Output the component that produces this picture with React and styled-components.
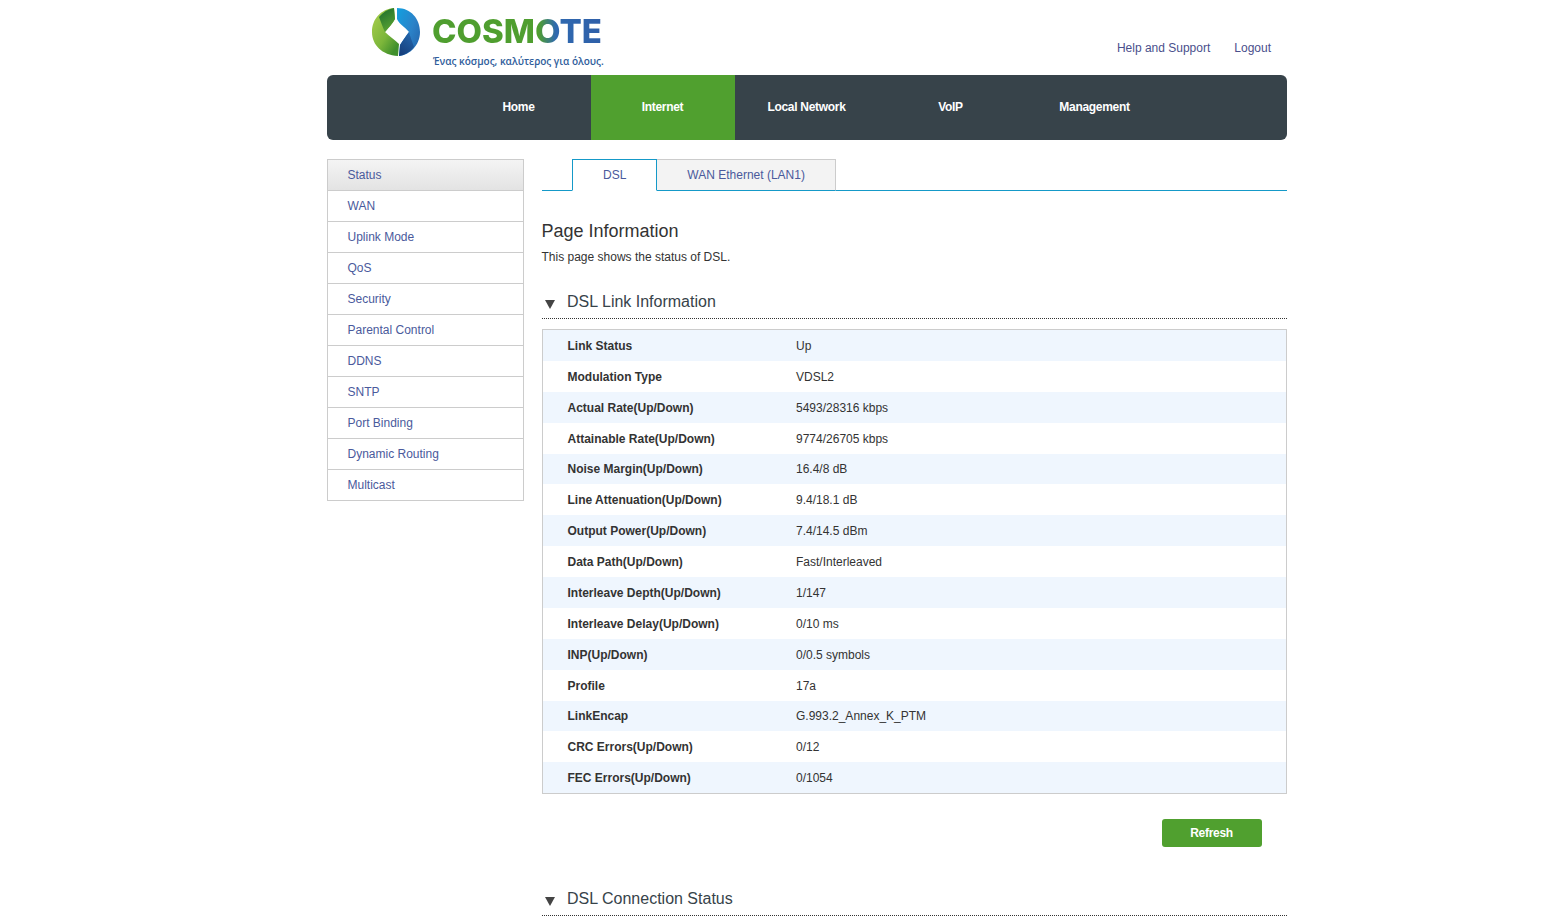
import React from 'react'
import styled, { createGlobalStyle } from 'styled-components'

const Global = createGlobalStyle`
  html, body { margin: 0; padding: 0; background: #fff; }
  body { font-family: "Liberation Sans", Arial, sans-serif; font-size: 12px; color: #333; }
`
const Page = styled.div`
  width: 960px;
  margin-left: 327px;
  height: 921px;
  overflow: hidden;
`
const Header = styled.header`
  height: 75px;
  display: flex;
  justify-content: space-between;
`
const Brand = styled.div`
  display: flex;
  gap: 11px;
  padding: 7px 0 0 44px;
`
const BrandText = styled.div`
  display: flex;
  flex-direction: column;
`
const Wordmark = styled.div`
  font-family: Inter, sans-serif;
  font-weight: 800;
  font-size: 33px;
  line-height: 48px;
  background: linear-gradient(90deg, #4f9e2f 0%, #4f9e2f 62%, #2f69b0 72%, #2f5fa8 100%);
  -webkit-background-clip: text;
  background-clip: text;
  color: transparent;
`
const Slogan = styled.div`
  font-family: "Open Sans", sans-serif;
  font-weight: 600;
  font-size: 10px;
  line-height: 14px;
  color: #2f5d9b;
  padding-left: 1px;
  margin-top: -1px;
`
const HeaderLinks = styled.div`
  display: flex;
  gap: 24px;
  padding: 41px 16px 0 0;
  a { color: #4a4f8c; text-decoration: none; line-height: 14px; }
`
const Nav = styled.nav`
  height: 65px;
  background: #37434a;
  border-radius: 6px;
  display: flex;
  padding-left: 120px;
`
const NavItem = styled.a`
  width: 144px;
  display: flex;
  align-items: center;
  justify-content: center;
  padding: 0 1px 2px 0;
  box-sizing: border-box;
  color: #fff;
  font-weight: bold;
  letter-spacing: -0.3px;
  background: ${p => (p.$active ? '#50a02f' : 'transparent')};
`
const Body = styled.div`
  display: flex;
  gap: 18px;
  padding-top: 19px;
`
const Side = styled.ul`
  width: 197px;
  flex: none;
  margin: 0;
  padding: 0;
  list-style: none;
  align-self: flex-start;
  box-sizing: border-box;
  border: 1px solid #ccc;
  border-bottom: 0;
`
const SideItem = styled.li`
  height: 31px;
  box-sizing: border-box;
  padding-left: 19.5px;
  line-height: 30px;
  color: #4a5a9c;
  border-bottom: 1px solid #ccc;
  background: ${p => (p.$active ? 'linear-gradient(#f4f4f4, #e3e3e3)' : '#fff')};
`
const Main = styled.main`
  flex: 1;
`
const Tabs = styled.div`
  height: 32px;
  box-sizing: border-box;
  display: flex;
  padding-left: 30px;
  border-bottom: 1px solid #1599c8;
`
const Tab = styled.div`
  height: 32px;
  box-sizing: border-box;
  padding: 0 30px;
  line-height: 30px;
  color: #4a5a9c;
  border: 1px solid ${p => (p.$active ? '#1599c8' : '#ccc')};
  border-left: ${p => (p.$active ? '1px solid #1599c8' : '0')};
  border-bottom: ${p => (p.$active ? '1px solid #fff' : '1px solid #1599c8')};
  background: ${p => (p.$active ? '#fff' : '#f3f3f3')};
`
const Title = styled.h1`
  margin: 29px 0 0 -0.5px;
  font-size: 18px;
  font-weight: normal;
  line-height: 22px;
  color: #333;
`
const Intro = styled.p`
  margin: 8px 0 0 -0.5px;
  line-height: 14px;
  color: #333;
`
const Section = styled.div`
  display: flex;
  align-items: center;
  box-sizing: border-box;
  height: 38px;
  padding: 4px 0 0 3px;
  gap: 12px;
  font-size: 16px;
  color: #37434a;
  border-bottom: 1px dotted #333;
  margin-top: ${p => p.$top}px;
`
const Triangle = styled.span`
  width: 0;
  height: 0;
  margin-top: 5px;
  border-left: 5px solid transparent;
  border-right: 5px solid transparent;
  border-top: 9px solid #444;
`
const Table = styled.div`
  margin-top: 10px;
  border: 1px solid #ccc;
`
const Row = styled.div`
  height: 30.89px;
  box-sizing: border-box;
  display: flex;
  align-items: center;
  padding: 1px 0 0 24.5px;
  color: #333;
  &:nth-child(odd) { background: #eff6fe; }
`
const Label = styled.div`
  width: 228.5px;
  font-weight: bold;
`
const Actions = styled.div`
  display: flex;
  justify-content: flex-end;
  padding: 25px 25px 0 0;
`
const Refresh = styled.button`
  width: 100px;
  height: 28px;
  padding: 0 1px 0 0;
  border: 0;
  border-radius: 3px;
  background: #50a02f;
  color: #fff;
  font: bold 12px "Liberation Sans", Arial, sans-serif;
  letter-spacing: -0.3px;
`

const rows = [
  ['Link Status', 'Up'],
  ['Modulation Type', 'VDSL2'],
  ['Actual Rate(Up/Down)', '5493/28316 kbps'],
  ['Attainable Rate(Up/Down)', '9774/26705 kbps'],
  ['Noise Margin(Up/Down)', '16.4/8 dB'],
  ['Line Attenuation(Up/Down)', '9.4/18.1 dB'],
  ['Output Power(Up/Down)', '7.4/14.5 dBm'],
  ['Data Path(Up/Down)', 'Fast/Interleaved'],
  ['Interleave Depth(Up/Down)', '1/147'],
  ['Interleave Delay(Up/Down)', '0/10 ms'],
  ['INP(Up/Down)', '0/0.5 symbols'],
  ['Profile', '17a'],
  ['LinkEncap', 'G.993.2_Annex_K_PTM'],
  ['CRC Errors(Up/Down)', '0/12'],
  ['FEC Errors(Up/Down)', '0/1054'],
]
const menu = ['Status', 'WAN', 'Uplink Mode', 'QoS', 'Security', 'Parental Control', 'DDNS', 'SNTP', 'Port Binding', 'Dynamic Routing', 'Multicast']
const navs = ['Home', 'Internet', 'Local Network', 'VoIP', 'Management']

const Logo = () => (
  <svg width="50" height="50" viewBox="0 0 50 50">
    <defs>
      <linearGradient id="lg" x1="0" y1="0.2" x2="0.7" y2="1">
        <stop offset="0" stopColor="#a4cc4a" />
        <stop offset="0.6" stopColor="#7cb63a" />
        <stop offset="1" stopColor="#3f8f2c" />
      </linearGradient>
      <linearGradient id="lgd" x1="0.2" y1="0" x2="0.6" y2="1">
        <stop offset="0" stopColor="#1d6e2c" />
        <stop offset="1" stopColor="#5aa334" />
      </linearGradient>
      <linearGradient id="lb" x1="0" y1="0" x2="1" y2="0.8">
        <stop offset="0" stopColor="#12a0e0" />
        <stop offset="0.6" stopColor="#2b82c8" />
        <stop offset="1" stopColor="#2467ae" />
      </linearGradient>
      <linearGradient id="lbd" x1="0.8" y1="0" x2="0.3" y2="1">
        <stop offset="0" stopColor="#2468ae" />
        <stop offset="1" stopColor="#163f7c" />
      </linearGradient>
    </defs>
    <path d="M23 1 C10 2 1 12 1 25 C1 38 11 48 27 49 L28 37 C24 33 18 29 14 25 C18 20 22 16 24 12 Z" fill="url(#lg)" />
    <path d="M23 1 C17 2 12 5 8 10 C10 15 12 21 14 25 C18 20 22 16 24 12 Z" fill="url(#lgd)" />
    <path d="M26 1 C40 1 49 12 49 25 C49 38 39 48 28 49 L29 38 C32 33 35 29 38 25 C34 20 28 17 26 12 Z" fill="url(#lb)" />
    <path d="M28 49 C34 48 39 45 43 40 C41 34 39 29 38 25 C35 29 32 33 29 38 Z" fill="url(#lbd)" />
  </svg>
)

export default function App() {
  return (
    <Page>
      <Global />
      <Header>
        <Brand>
          <Logo />
          <BrandText>
            <Wordmark>COSMOTE</Wordmark>
            <Slogan>Ένας κόσμος, καλύτερος για όλους.</Slogan>
          </BrandText>
        </Brand>
        <HeaderLinks>
          <a>Help and Support</a>
          <a>Logout</a>
        </HeaderLinks>
      </Header>
      <Nav>
        {navs.map(n => <NavItem key={n} $active={n === 'Internet'}>{n}</NavItem>)}
      </Nav>
      <Body>
        <Side>
          {menu.map((m, i) => <SideItem key={m} $active={i === 0}>{m}</SideItem>)}
        </Side>
        <Main>
          <Tabs>
            <Tab $active>DSL</Tab>
            <Tab>WAN Ethernet (LAN1)</Tab>
          </Tabs>
          <Title>Page Information</Title>
          <Intro>This page shows the status of DSL.</Intro>
          <Section $top={17}><Triangle />DSL Link Information</Section>
          <Table>
            {rows.map(r => (
              <Row key={r[0]}>
                <Label>{r[0]}</Label>
                <div>{r[1]}</div>
              </Row>
            ))}
          </Table>
          <Actions><Refresh>Refresh</Refresh></Actions>
          <Section $top={31}><Triangle />DSL Connection Status</Section>
        </Main>
      </Body>
    </Page>
  )
}
